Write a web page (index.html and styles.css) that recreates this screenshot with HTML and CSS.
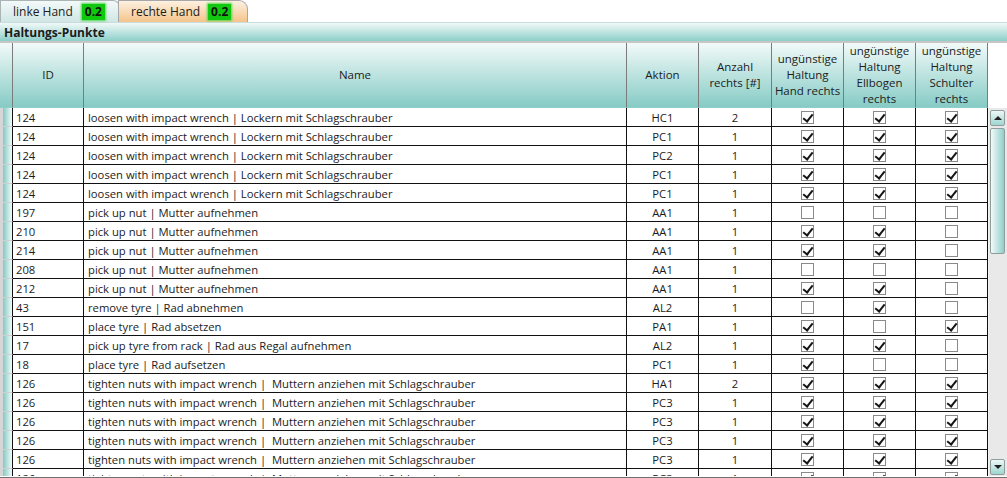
FILE: index.html
```html
<!DOCTYPE html>
<html lang="de">
  <head>
    <meta charset="UTF-8" />
    <title>Haltungs-Punkte</title>
    <link rel="stylesheet" href="styles.css">
  </head>
  <body>
    <div class="tabs">
      <div class="tab tab-left">linke Hand <span class="badge">0.2</span></div>
      <div class="tab tab-right">rechte Hand <span class="badge">0.2</span></div>
    </div>
    <div class="section">Haltungs-Punkte</div>

    <div class="grid">
      <div class="head">
        <div class="hc"></div>
        <div class="hc">ID</div>
        <div class="hc">Name</div>
        <div class="hc">Aktion</div>
        <div class="hc">Anzahl<br>rechts [#]</div>
        <div class="hc">ungünstige<br>Haltung<br>Hand rechts</div>
        <div class="hc">ungünstige<br>Haltung<br>Ellbogen<br>rechts</div>
        <div class="hc">ungünstige<br>Haltung<br>Schulter<br>rechts</div>
        <div class="corner"></div>
      </div>

      <div class="body">
        <div class="rows">
          <div class="row"><div class="sel"></div><div class="c">124</div><div class="c name">loosen with impact wrench | Lockern mit Schlagschrauber</div><div class="c mid">HC1</div><div class="c mid">2</div><div class="c mid"><span class="cb on"></span></div><div class="c mid"><span class="cb on"></span></div><div class="c mid"><span class="cb on"></span></div></div>
          <div class="row"><div class="sel"></div><div class="c">124</div><div class="c name">loosen with impact wrench | Lockern mit Schlagschrauber</div><div class="c mid">PC1</div><div class="c mid">1</div><div class="c mid"><span class="cb on"></span></div><div class="c mid"><span class="cb on"></span></div><div class="c mid"><span class="cb on"></span></div></div>
          <div class="row"><div class="sel"></div><div class="c">124</div><div class="c name">loosen with impact wrench | Lockern mit Schlagschrauber</div><div class="c mid">PC2</div><div class="c mid">1</div><div class="c mid"><span class="cb on"></span></div><div class="c mid"><span class="cb on"></span></div><div class="c mid"><span class="cb on"></span></div></div>
          <div class="row"><div class="sel"></div><div class="c">124</div><div class="c name">loosen with impact wrench | Lockern mit Schlagschrauber</div><div class="c mid">PC1</div><div class="c mid">1</div><div class="c mid"><span class="cb on"></span></div><div class="c mid"><span class="cb on"></span></div><div class="c mid"><span class="cb on"></span></div></div>
          <div class="row"><div class="sel"></div><div class="c">124</div><div class="c name">loosen with impact wrench | Lockern mit Schlagschrauber</div><div class="c mid">PC1</div><div class="c mid">1</div><div class="c mid"><span class="cb on"></span></div><div class="c mid"><span class="cb on"></span></div><div class="c mid"><span class="cb on"></span></div></div>
          <div class="row"><div class="sel"></div><div class="c">197</div><div class="c name">pick up nut | Mutter aufnehmen</div><div class="c mid">AA1</div><div class="c mid">1</div><div class="c mid"><span class="cb"></span></div><div class="c mid"><span class="cb"></span></div><div class="c mid"><span class="cb"></span></div></div>
          <div class="row"><div class="sel"></div><div class="c">210</div><div class="c name">pick up nut | Mutter aufnehmen</div><div class="c mid">AA1</div><div class="c mid">1</div><div class="c mid"><span class="cb on"></span></div><div class="c mid"><span class="cb on"></span></div><div class="c mid"><span class="cb"></span></div></div>
          <div class="row"><div class="sel"></div><div class="c">214</div><div class="c name">pick up nut | Mutter aufnehmen</div><div class="c mid">AA1</div><div class="c mid">1</div><div class="c mid"><span class="cb on"></span></div><div class="c mid"><span class="cb on"></span></div><div class="c mid"><span class="cb"></span></div></div>
          <div class="row"><div class="sel"></div><div class="c">208</div><div class="c name">pick up nut | Mutter aufnehmen</div><div class="c mid">AA1</div><div class="c mid">1</div><div class="c mid"><span class="cb"></span></div><div class="c mid"><span class="cb"></span></div><div class="c mid"><span class="cb"></span></div></div>
          <div class="row"><div class="sel"></div><div class="c">212</div><div class="c name">pick up nut | Mutter aufnehmen</div><div class="c mid">AA1</div><div class="c mid">1</div><div class="c mid"><span class="cb on"></span></div><div class="c mid"><span class="cb on"></span></div><div class="c mid"><span class="cb"></span></div></div>
          <div class="row"><div class="sel"></div><div class="c">43</div><div class="c name">remove tyre | Rad abnehmen</div><div class="c mid">AL2</div><div class="c mid">1</div><div class="c mid"><span class="cb"></span></div><div class="c mid"><span class="cb on"></span></div><div class="c mid"><span class="cb"></span></div></div>
          <div class="row"><div class="sel"></div><div class="c">151</div><div class="c name">place tyre | Rad absetzen</div><div class="c mid">PA1</div><div class="c mid">1</div><div class="c mid"><span class="cb on"></span></div><div class="c mid"><span class="cb"></span></div><div class="c mid"><span class="cb on"></span></div></div>
          <div class="row"><div class="sel"></div><div class="c">17</div><div class="c name">pick up tyre from rack | Rad aus Regal aufnehmen</div><div class="c mid">AL2</div><div class="c mid">1</div><div class="c mid"><span class="cb on"></span></div><div class="c mid"><span class="cb on"></span></div><div class="c mid"><span class="cb"></span></div></div>
          <div class="row"><div class="sel"></div><div class="c">18</div><div class="c name">place tyre | Rad aufsetzen</div><div class="c mid">PC1</div><div class="c mid">1</div><div class="c mid"><span class="cb on"></span></div><div class="c mid"><span class="cb"></span></div><div class="c mid"><span class="cb"></span></div></div>
          <div class="row"><div class="sel"></div><div class="c">126</div><div class="c name">tighten nuts with impact wrench |&nbsp; Muttern anziehen mit Schlagschrauber</div><div class="c mid">HA1</div><div class="c mid">2</div><div class="c mid"><span class="cb on"></span></div><div class="c mid"><span class="cb on"></span></div><div class="c mid"><span class="cb on"></span></div></div>
          <div class="row"><div class="sel"></div><div class="c">126</div><div class="c name">tighten nuts with impact wrench |&nbsp; Muttern anziehen mit Schlagschrauber</div><div class="c mid">PC3</div><div class="c mid">1</div><div class="c mid"><span class="cb on"></span></div><div class="c mid"><span class="cb on"></span></div><div class="c mid"><span class="cb on"></span></div></div>
          <div class="row"><div class="sel"></div><div class="c">126</div><div class="c name">tighten nuts with impact wrench |&nbsp; Muttern anziehen mit Schlagschrauber</div><div class="c mid">PC3</div><div class="c mid">1</div><div class="c mid"><span class="cb on"></span></div><div class="c mid"><span class="cb on"></span></div><div class="c mid"><span class="cb on"></span></div></div>
          <div class="row"><div class="sel"></div><div class="c">126</div><div class="c name">tighten nuts with impact wrench |&nbsp; Muttern anziehen mit Schlagschrauber</div><div class="c mid">PC3</div><div class="c mid">1</div><div class="c mid"><span class="cb on"></span></div><div class="c mid"><span class="cb on"></span></div><div class="c mid"><span class="cb on"></span></div></div>
          <div class="row"><div class="sel"></div><div class="c">126</div><div class="c name">tighten nuts with impact wrench |&nbsp; Muttern anziehen mit Schlagschrauber</div><div class="c mid">PC3</div><div class="c mid">1</div><div class="c mid"><span class="cb on"></span></div><div class="c mid"><span class="cb on"></span></div><div class="c mid"><span class="cb on"></span></div></div>
          <div class="row"><div class="sel"></div><div class="c">126</div><div class="c name">tighten nuts with impact wrench |&nbsp; Muttern anziehen mit Schlagschrauber</div><div class="c mid">PC3</div><div class="c mid">1</div><div class="c mid"><span class="cb on"></span></div><div class="c mid"><span class="cb on"></span></div><div class="c mid"><span class="cb on"></span></div></div>
        </div>

        <div class="vscroll">
          <div class="sb-btn"><span class="arrow-up"></span></div>
          <div class="thumb"></div>
          <div class="track"></div>
          <div class="sb-btn"><span class="arrow-down"></span></div>
        </div>
      </div>
    </div>
  </body>
</html>
```

FILE: styles.css
```css
* {
  box-sizing: border-box;
}
body {
  margin: 0;
  width: 1007px;
  height: 478px;
  overflow: hidden;
  background: #fff;
  font-family: "Open Sans", "Liberation Sans", sans-serif;
  font-size: 11.25px;
  color: #1c1c1c;
}

/* tabs */
.tabs {
  display: flex;
  height: 22px;
  align-items: flex-end;
}
.tab {
  display: flex;
  align-items: center;
  height: 22px;
  border: 1px solid #a9b4b4;
  border-bottom: none;
  border-radius: 0 7px 0 0;
  font-size: 12px;
}
.tab-left {
  width: 120px;
  padding-left: 12px;
  gap: 9px;
  background: linear-gradient(#f4f9f9, #cfe7e5);
}
.tab-right {
  width: 130px;
  margin-left: -2px;
  padding-left: 12px;
  gap: 8px;
  background: linear-gradient(#fdf1e2, #f4c48a);
  border-color: #a7a7a7;
  border-radius: 0 9px 0 0;
}
.badge {
  display: inline-block;
  height: 16px;
  line-height: 16px;
  padding: 0 3px;
  background: #0fc80f;
  box-shadow: 0 0 2px 1px #4fd94f;
  font-weight: bold;
  font-size: 12px;
  color: #111;
}

/* section title */
.section {
  height: 21px;
  padding: 1px 4px 0;
  line-height: 18px;
  font-weight: bold;
  font-size: 12px;
  background: linear-gradient(#f1f9f8, #8dcfc9);
  border-top: 1px solid #c7dcdb;
  border-bottom: 2px solid #c6c6c6;
}

/* grid */
.head {
  display: grid;
  grid-template-columns: 13px 71px 543px 72px 73px 72px 72px 72px 19px;
  height: 65px;
}
.hc {
  display: flex;
  align-items: center;
  justify-content: center;
  text-align: center;
  line-height: 16px;
  font-size: 11.5px;
  background: linear-gradient(#f2faf9, #86cbc5);
  border-right: 1px solid #7b7b7b;
  border-bottom: 1px solid #8fcfc9;
}
.corner {
  background: #fff;
}

.body {
  display: flex;
  height: 370px;
  overflow: hidden;
  border-bottom: 1px solid #707070;
}
.rows {
  width: 988px;
  height: 368px;
  overflow: hidden;
}
.row {
  display: grid;
  grid-template-columns: 13px 71px 543px 72px 73px 72px 72px 72px;
  height: 19px;
}
.sel {
  border-left: 3px solid #d6d6d6;
  border-right: 1px solid #111;
  border-bottom: 1px solid #d0d0d0;
  background: linear-gradient(to right, #83c8c2, #f4fbfa);
}
.c {
  display: flex;
  align-items: center;
  padding-left: 3px;
  white-space: nowrap;
  overflow: hidden;
  border-right: 1px solid #111;
  border-bottom: 1px solid #111;
}
.name {
  padding-left: 4px;
}
.mid {
  justify-content: center;
  padding-left: 0;
}

/* checkbox */
.cb {
  position: relative;
  display: block;
  width: 13px;
  height: 13px;
  border: 1px solid #8a8a8a;
  background: #fff;
}
.cb.on::after {
  content: "";
  position: absolute;
  left: 3px;
  top: 0;
  width: 4px;
  height: 8px;
  border: solid #151515;
  border-width: 0 2px 2px 0;
  transform: rotate(38deg);
}

/* scrollbar */
.vscroll {
  display: flex;
  flex-direction: column;
  width: 19px;
  height: 368px;
  padding: 2px 2px 1px 1px;
  gap: 2px;
  background: #e9e9e9;
  border-left: 1px solid #f4f4f4;
}
.sb-btn {
  display: flex;
  align-items: center;
  justify-content: center;
  height: 16px;
  border: 1px solid #8f9e9d;
  border-radius: 2px;
  background: linear-gradient(#eef8f7, #9fd6d1);
}
.arrow-up,
.arrow-down {
  width: 0;
  height: 0;
  border-left: 4px solid transparent;
  border-right: 4px solid transparent;
}
.arrow-up {
  border-bottom: 4px solid #222;
}
.arrow-down {
  border-top: 4px solid #222;
}
.thumb {
  height: 126px;
  border: 1px solid #8f9e9d;
  border-radius: 2px;
  background: linear-gradient(to right, #f3faf9, #8fcfc9);
}
.track {
  flex: 1;
}
```
